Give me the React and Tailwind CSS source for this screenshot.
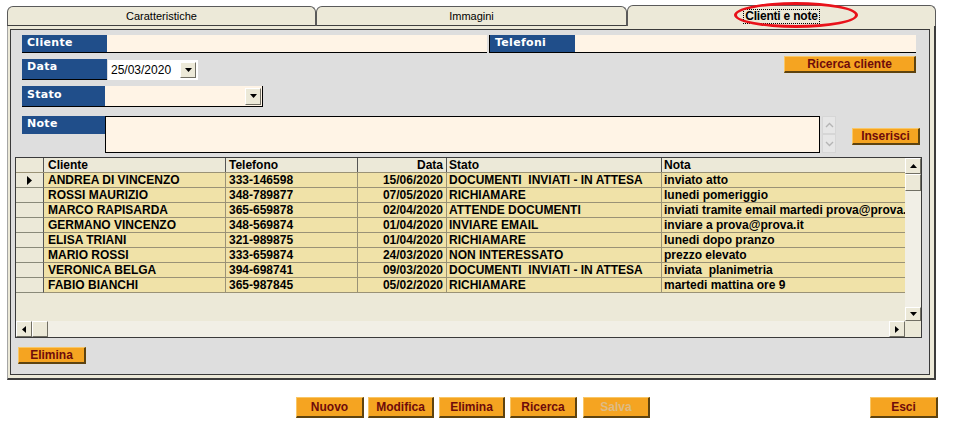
import React from 'react';

const rows = [
  ['ANDREA DI VINCENZO', '333-146598', '15/06/2020', 'DOCUMENTI  INVIATI - IN ATTESA', 'inviato atto'],
  ['ROSSI MAURIZIO', '348-789877', '07/05/2020', 'RICHIAMARE', 'lunedi pomeriggio'],
  ['MARCO RAPISARDA', '365-659878', '02/04/2020', 'ATTENDE DOCUMENTI', 'inviati tramite email martedi prova@prova.it'],
  ['GERMANO VINCENZO', '348-569874', '01/04/2020', 'INVIARE EMAIL', 'inviare a prova@prova.it'],
  ['ELISA TRIANI', '321-989875', '01/04/2020', 'RICHIAMARE', 'lunedi dopo pranzo'],
  ['MARIO ROSSI', '333-659874', '24/03/2020', 'NON INTERESSATO', 'prezzo elevato'],
  ['VERONICA BELGA', '394-698741', '09/03/2020', 'DOCUMENTI  INVIATI - IN ATTESA', 'inviata  planimetria'],
  ['FABIO BIANCHI', '365-987845', '05/02/2020', 'RICHIAMARE', 'martedi mattina ore 9'],
];

const Label = ({ children, className = '' }) => (
  <div className={`bg-[#204E8A] text-white font-bold text-[11px] font-['DejaVu_Sans'] tracking-[0.3px] pl-[5px] pt-[1px] leading-[14px] border-b border-black ${className}`}>
    {children}
  </div>
);

const OBtn = ({ children, className = '', disabled = false }) => (
  <button
    className={`flex items-center justify-center bg-[#F5A421] border-t border-l border-t-[#F9C766] border-l-[#F9C766] border-r-2 border-b-2 border-r-[#5E430F] border-b-[#5E430F] text-[12px] font-bold leading-none ${disabled ? 'text-[#DDBB84]' : 'text-[#6E0B0B]'} ${className}`}
  >
    {children}
  </button>
);

const Tri = ({ dir = 'down', color = '#000', big = false }) => {
  const pts = big
    ? '0,0 0,9 5,4.5'
    : { down: '0,0 7,0 3.5,4', up: '0,4 7,4 3.5,0', right: '0,0 0,7 4,3.5', left: '4,0 4,7 0,3.5' }[dir];
  const w = big ? 5 : dir === 'left' || dir === 'right' ? 4 : 7;
  const h = big ? 9 : dir === 'left' || dir === 'right' ? 7 : 4;
  return (
    <svg width={w} height={h} viewBox={`0 0 ${w} ${h}`}>
      <polygon points={pts} fill={color} />
    </svg>
  );
};

const SBtn = ({ dir, className = '' }) => (
  <div className={`flex items-center justify-center bg-[#ECE9D8] border-t border-l border-t-white border-l-white border-r border-b border-r-[#716F64] border-b-[#716F64] ${className}`}>
    <Tri dir={dir} />
  </div>
);

const Tab = ({ children, active = false, className = '' }) => (
  <div
    className={`flex items-center justify-center bg-[#ECE9D8] border-t border-l border-r border-[#5a5a5a] rounded-t-[6px] text-[11px] text-black ${active ? 'h-[21px]' : 'h-[20px] border-b border-b-[#404040]'} ${className}`}
  >
    {children}
  </div>
);

export default function App() {
  return (
    <div className="relative w-[955px] h-[425px] bg-white font-['Liberation_Sans',Arial,sans-serif] overflow-hidden">
      {/* tabs */}
      <div className="flex items-end ml-[7px] pt-[5px] w-[929px]">
        <Tab className="w-[309px]">Caratteristiche</Tab>
        <Tab className="w-[311px]">Immagini</Tab>
        <Tab active className="w-[309px]">
          <span className="outline-1 outline-dotted outline-black px-[1px] leading-[13px] text-[12px] font-bold tracking-[-0.2px]">Clienti e note</span>
        </Tab>
      </div>
      <div className="absolute left-[734px] top-[2px] w-[124px] h-[26px] rounded-[50%] border-[3px] border-[#E8121A]" />

      {/* panel */}
      <div className="ml-[7px] w-[929px] h-[354px] bg-[#ECE9D8] border-l border-l-[#a5a5a5] border-r-2 border-r-[#3c3c3c] border-b-2 border-b-[#3c3c3c] pl-[2px] pt-[3px] pr-[4px] pb-[3px]">
        <div className="w-[920px] h-[346px] bg-[#DEDEDE] border border-[#3a3a3a] flex flex-col">
          {/* row 1 */}
          <div className="flex ml-[11px] mt-[5px] h-[18px]">
            <Label className="w-[85px] h-[18px]">Cliente</Label>
            <div className="w-[380px] h-[18px] bg-[#FFF4E6] border-b border-black" />
            <div className="w-[2px]" />
            <Label className="w-[86px] h-[18px] border-l border-l-black">Telefoni</Label>
            <div className="w-[341px] h-[18px] bg-[#FFF4E6] border-b border-black" />
          </div>

          {/* row 2 */}
          <div className="flex items-start ml-[11px] mr-[13px] mt-[3px] h-[24px]">
            <Label className="w-[85px] h-[21px] mt-[3px]">Data</Label>
            <div className="ml-[1px] mt-[4px] w-[90px] h-[20px] bg-white flex items-center pl-[3px] pr-[2px]">
              <span className="text-[12px] text-black flex-1">25/03/2020</span>
              <SBtn dir="down" className="w-[16px] h-[16px]" />
            </div>
            <OBtn className="ml-auto w-[132px] h-[17px]">Ricerca cliente</OBtn>
          </div>

          {/* row 3 */}
          <div className="flex ml-[11px] mt-[6px] h-[21px]">
            <Label className="w-[83px] h-[21px] pt-[2px]">Stato</Label>
            <div className="w-[158px] h-[21px] bg-[#FFF4E6] border-b border-r border-black flex items-center justify-end pr-[1px]">
              <SBtn dir="down" className="w-[16px] h-[17px]" />
            </div>
          </div>

          {/* row 4 */}
          <div className="flex ml-[11px] mt-[9px] h-[37px]">
            <Label className="w-[83px] h-[18px] border-b-0">Note</Label>
            <div className="w-[715px] h-[37px] bg-[#FFF4E6] border border-black" />
            <div className="ml-[2px] w-[14px] flex flex-col">
              <div className="h-[18px] flex items-center justify-center border border-[#d6d6d6] bg-[#e6e6e6]">
                <svg width="9" height="6" viewBox="0 0 9 6"><polyline points="1,5 4.5,1.5 8,5" fill="none" stroke="#b5b5b5" strokeWidth="1.4" /></svg>
              </div>
              <div className="h-[19px] flex items-center justify-center border border-[#d6d6d6] bg-[#e6e6e6]">
                <svg width="9" height="6" viewBox="0 0 9 6"><polyline points="1,1 4.5,4.5 8,1" fill="none" stroke="#b5b5b5" strokeWidth="1.4" /></svg>
              </div>
            </div>
            <OBtn className="ml-[16px] mt-[12px] w-[68px] h-[17px]">Inserisci</OBtn>
          </div>

          {/* table */}
          <div className="ml-[4px] mt-[4px] w-[907px] h-[181px] border border-[#3a3a3a] flex flex-col bg-[#ECE9D8]">
            <div className="flex h-[163px]">
              <div className="w-[889px] h-[163px] overflow-hidden flex flex-col text-[12px] font-bold text-black">
                <div className="flex h-[15px] leading-[14px] border-b border-[#9A9276] bg-[#ECE9D8]">
                  <div className="w-[28px] shrink-0 border-r border-[#555]" />
                  <div className="w-[182px] shrink-0 border-r border-[#555] pl-[4px]">Cliente</div>
                  <div className="w-[132px] shrink-0 border-r border-[#555] pl-[3px]">Telefono</div>
                  <div className="w-[89px] shrink-0 border-r border-[#555] pr-[3px] text-right">Data</div>
                  <div className="w-[215px] shrink-0 border-r border-[#555] pl-[2px]">Stato</div>
                  <div className="w-[260px] shrink-0 pl-[2px]">Nota</div>
                </div>
                {rows.map((r, i) => (
                  <div key={i} className="flex h-[15px] leading-[14px]">
                    <div className="w-[28px] shrink-0 border-r border-b border-r-[#555] border-b-[#8a8a7a] bg-[#ECE9D8] flex items-center justify-center">
                      {i === 0 && <Tri big />}
                    </div>
                    <div className="flex flex-1 bg-[#F0E2A8] border-b border-[#9A9276] whitespace-pre">
                      <div className="w-[182px] shrink-0 border-r border-[#9A9276] pl-[4px] overflow-hidden">{r[0]}</div>
                      <div className="w-[132px] shrink-0 border-r border-[#9A9276] pl-[3px] overflow-hidden">{r[1]}</div>
                      <div className="w-[89px] shrink-0 border-r border-[#9A9276] pr-[3px] text-right overflow-hidden">{r[2]}</div>
                      <div className="w-[215px] shrink-0 border-r border-[#9A9276] pl-[2px] overflow-hidden">{r[3]}</div>
                      <div className="w-[260px] shrink-0 pl-[2px]">{r[4]}</div>
                    </div>
                  </div>
                ))}
              </div>
              {/* vertical scrollbar */}
              <div className="w-[16px] h-[163px] flex flex-col bg-[#F1EFE6]">
                <SBtn dir="up" className="h-[16px]" />
                <div className="h-[17px] bg-[#ECE9D8] border-t border-l border-t-white border-l-white border-r border-b border-r-[#716F64] border-b-[#716F64]" />
                <div className="flex-1" />
                <SBtn dir="down" className="h-[14px]" />
              </div>
            </div>
            {/* horizontal scrollbar */}
            <div className="flex h-[16px]">
              <div className="w-[889px] flex bg-[#F1EFE6]">
                <SBtn dir="left" className="w-[16px]" />
                <div className="w-[16px] bg-[#ECE9D8] border-t border-l border-t-white border-l-white border-r border-b border-r-[#716F64] border-b-[#716F64]" />
                <div className="flex-1" />
                <SBtn dir="right" className="w-[16px]" />
              </div>
              <div className="w-[16px] bg-[#ECE9D8]" />
            </div>
          </div>

          <OBtn className="ml-[7px] mt-[9px] w-[68px] h-[17px]">Elimina</OBtn>
        </div>
      </div>

      {/* bottom buttons */}
      <div className="flex mt-[17px] h-[21px]">
        <OBtn className="ml-[296px] w-[68px] h-[21px]">Nuovo</OBtn>
        <OBtn className="ml-[4px] w-[66px] h-[21px]">Modifica</OBtn>
        <OBtn className="ml-[5px] w-[66px] h-[21px]">Elimina</OBtn>
        <OBtn className="ml-[5px] w-[67px] h-[21px]">Ricerca</OBtn>
        <OBtn disabled className="ml-[6px] w-[67px] h-[21px]">Salva</OBtn>
        <OBtn className="ml-[220px] w-[68px] h-[21px]">Esci</OBtn>
      </div>
    </div>
  );
}
